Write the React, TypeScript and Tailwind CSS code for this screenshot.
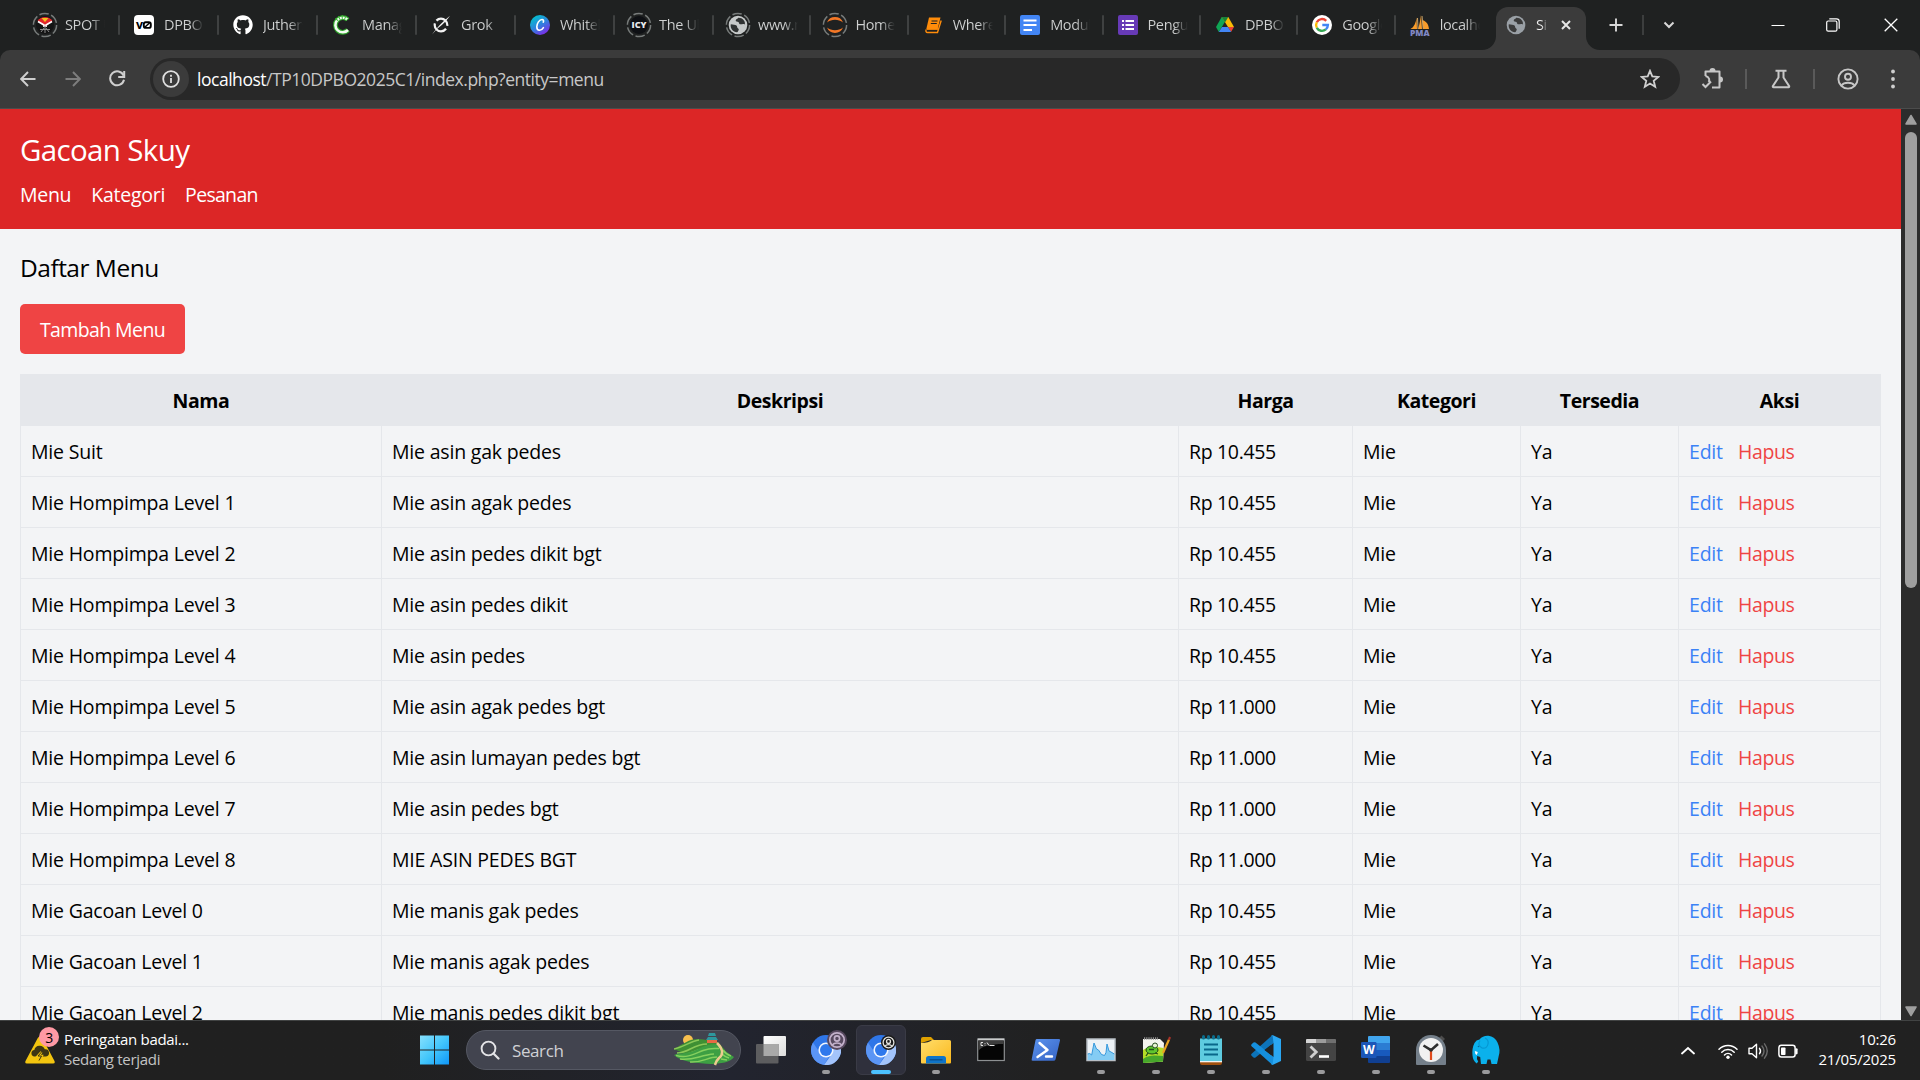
import React from "react";
import type { ReactNode } from "react";
import { FaGithub } from "react-icons/fa";

type SvgProps = { size?: number; box?: string; children: ReactNode; className?: string };

function Svg({ size = 30, box = "0 0 30 30", children, className = "" }: SvgProps) {
  return (
    <svg width={size} height={size} viewBox={box} fill="none" className={`shrink-0 ${className}`}>
      {children}
    </svg>
  );
}

/* ---------- Tab favicons ---------- */

function Ring({ children }: { children: ReactNode }) {
  return (
    <Svg size={26} box="0 0 26 26">
      <circle cx="13" cy="13" r="11.6" stroke="#777b7a" strokeWidth="1.5" strokeDasharray="9.5 2.65" />
      {children}
    </Svg>
  );
}

function Globe({ color, hole }: { color: string; hole: string }) {
  return (
    <g>
      <circle cx="13" cy="13" r="9.3" fill={color} />
      <path d="M5.800 12.200c2.200.4 4.500.3 5.700 1.300 1 .9.200 2 1.300 2.700 1.100.6 1.200 1.400.6 2.400-.3.700-.5 1.500-1.400 1.700-4-.5-7-4-6.200-8.100z" fill={hole} />
      <path d="M13.200 5.700c-.3 1.300-2.400 1.300-2.500 2.700 0 1.300 1.800.9 2.700 1.500.8.600.4 1.900 1.500 2.300 1.500.5 2.800-.8 4.900.2 1-3.400-2.500-7-6.600-6.700z" fill={hole} />
    </g>
  );
}

const favicons: ReactNode[] = [
  <Ring>
    <circle cx="13" cy="13" r="9" fill="#141414" />
    <path d="M5.500 9a9 9 0 0 1 15 0l-6 5h-3z" fill="#e3262b" />
    <path d="M9.500 6 13 10l3.500-4z" fill="#f6c21c" />
    <path d="M6 9.500 12 13v2M20 9.500 14 13v2" stroke="#fff" strokeWidth="1.700" />
    <path d="M8 17.500h10M13 14v7M12 16l-3 4M14 16l3 4" stroke="#8a8a8a" strokeWidth="1" />
  </Ring>,
  <Svg size={20} box="0 0 20 20">
    <rect width="20" height="20" rx="4" fill="#fff" />
    <text x="2" y="13.700" textLength="7" lengthAdjust="spacingAndGlyphs" fill="#000" fontSize="12" fontWeight="700">v</text>
    <rect x="9.800" y="7.300" width="7" height="5.600" rx="2" stroke="#000" strokeWidth="1.900" />
    <path d="m10.500 12.500 5.500-5" stroke="#000" strokeWidth="1.500" />
  </Svg>,
  <FaGithub size={20} color="#fff" />,
  <Svg size={20} box="0 0 20 20">
    <path d="M15.500 4.500A7.300 7.300 0 1 0 16 15" stroke="#2fa32b" strokeWidth="4.800" />
    <path d="M15.500 4.500A7.300 7.300 0 1 0 16 15" stroke="#f1fcf0" strokeWidth="2.600" />
    <path d="M16 4.700A7.300 7.300 0 0 0 4 6" stroke="#3cb534" strokeWidth="3.600" strokeDasharray="1 2" />
  </Svg>,
  <Svg size={20} box="0 0 20 20">
    <circle cx="10" cy="10" r="6.300" stroke="#f2f2f2" strokeWidth="2.200" strokeDasharray="17 3 17 3" strokeDashoffset="-4" />
    <path d="M1 19.500C5 14 11 7 19 .8 14 8 9 11.500 5.500 14.500z" fill="#f2f2f2" />
  </Svg>,
  <Svg size={20} box="0 0 20 20">
    <defs>
      <linearGradient id="canva" x1="3" y1="1" x2="15" y2="19" gradientUnits="userSpaceOnUse">
        <stop stopColor="#00c4cc" />
        <stop offset=".5" stopColor="#2b86dd" />
        <stop offset="1" stopColor="#7d2ae8" />
      </linearGradient>
    </defs>
    <circle cx="10" cy="10" r="10" fill="url(#canva)" />
    <path d="M13.300 7.200c.6-1.200.2-2.700-1.300-2.700-2.600 0-5.200 4-5.200 7.300 0 2 1 3.500 2.700 3.500s3-1.100 3.900-2.700" stroke="#fff" strokeWidth="1.600" strokeLinecap="round" />
  </Svg>,
  <Ring>
    <circle cx="13" cy="13" r="9" fill="#0e1014" />
    <text x="5.500" y="16" textLength="15" lengthAdjust="spacingAndGlyphs" fill="#e9e9ec" fontSize="8.500" fontWeight="800">ICY</text>
  </Ring>,
  <Ring>
    <Globe color="#c5c8c8" hole="#2f3232" />
  </Ring>,
  <Ring>
    <path d="M5 10.500a8.600 8.600 0 0 1 16 0c-4.500-3.700-11.500-3.700-16 0z" fill="#f37726" />
    <path d="M5 15.500a8.600 8.600 0 0 0 16 0c-4.500 3.700-11.500 3.700-16 0z" fill="#f37726" />
  </Ring>,
  <Svg size={18} box="0 0 18 18">
    <path d="M5 1.500h11.500l-3 12H2.200z" fill="#ff8c0a" />
    <path d="M3 13h11.500M2.200 13.500c-.8 1.600 0 3 1.300 3h10l3.700-12" stroke="#ff8c0a" strokeWidth="1.400" />
    <path d="M7.500 5h6M6.800 7.500h6" stroke="#1f2121" strokeWidth="1.100" />
  </Svg>,
  <Svg size={20} box="0 0 20 20">
    <rect width="20" height="20" rx="2" fill="#4285f4" />
    <path d="M3.500 5.500h13M3.500 10h13M3.500 15h8.500" stroke="#fff" strokeWidth="2.200" />
  </Svg>,
  <Svg size={20} box="0 0 20 20">
    <rect width="20" height="20" rx="2" fill="#673ab7" />
    <path d="M7.500 6H16M7.500 10H16M7.500 14H16M4 6h2M4 10h2M4 14h2" stroke="#fff" strokeWidth="2" />
  </Svg>,
  <Svg size={20} box="0 0 20 20">
    <path d="M6.700 2 1 12l2.800 5L10 6.800z" fill="#0fa554" />
    <path d="M6.700 2h6.600L19 12h-6z" fill="#fbbc05" />
    <path d="M6.700 2h6.600L10 7.500z" fill="#188038" />
    <path d="M13 12h6l-3 5z" fill="#ea4335" />
    <path d="M3.800 17 7 12h6l3.200 5z" fill="#4285f4" />
  </Svg>,
  <Svg size={20} box="0 0 20 20">
    <circle cx="10" cy="10" r="10" fill="#fff" />
    <path d="M14.200 5.800A5.900 5.900 0 0 0 4.800 7.200" stroke="#ea4335" strokeWidth="2.400" />
    <path d="M4.800 7.200a5.900 5.900 0 0 0 0 5.600" stroke="#fbbc05" strokeWidth="2.400" />
    <path d="M4.800 12.800a5.900 5.900 0 0 0 9 1.600" stroke="#34a853" strokeWidth="2.400" />
    <path d="M13.800 14.400A5.900 5.900 0 0 0 15.900 10H10.300" stroke="#4285f4" strokeWidth="2.400" />
  </Svg>,
  <Svg size={21} box="0 0 21 21">
    <path d="M7.500 2.500C7 8 5 12 1.500 14H8zM12 0c-1 6-1.500 10-3 14h4zM13.500 5c5 2 6 5 6.500 9h-6z" fill="#f89c2b" />
    <path d="M8.500 3 9 14M13 1l1.200 13" stroke="#c9a46a" strokeWidth="1" />
    <text x="1" y="20.500" textLength="19.500" lengthAdjust="spacingAndGlyphs" fill="#8088c4" fontSize="8" fontWeight="800">PMA</text>
  </Svg>,
];

const tabTitles = ["SPOT UPI", "DPBO C", "Juthersk", "Manage", "Grok", "Whiteb", "The Ulti", "www.me", "Home P", "Where i", "Modul 1", "Pengum", "DPBO 2", "Google", "localhos"];

function TabStrip() {
  return (
    <div className="flex h-[50px] bg-[#1f2121] pl-[21px]">
      <div className="flex w-[1472px] shrink-0">
        {tabTitles.map((title, i) => (
          <div key={title} className={`relative flex items-center ${i < 7 ? "w-[99px] shrink-0" : "min-w-0 flex-1"}`}>
            <span className="flex w-12 shrink-0 items-center justify-center">{favicons[i]}</span>
            <span className="-ml-[4px] w-[40px] overflow-hidden bg-gradient-to-r from-[#d0d2d2] from-65% to-[#1f2121] bg-clip-text text-[14.5px] tracking-[-0.35px] whitespace-nowrap text-transparent">
              {title}
            </span>
            {i < 14 && <span className="absolute top-[15px] right-0 h-5 w-[2px] rounded bg-[#3f4141]" />}
          </div>
        ))}
      </div>
      <div className="relative mt-[7px] ml-[3px] flex h-[43px] w-[90px] shrink-0 items-center rounded-t-[12px] bg-[#3b3b3b] pb-[7px] pl-[7px]">
        <svg className="absolute bottom-0 -left-[14px]" width="14" height="14"><path d="M14 0v14H0A14 14 0 0 0 14 0z" fill="#3b3b3b" /></svg>
        <svg className="absolute -right-[14px] bottom-0" width="14" height="14"><path d="M0 0v14h14A14 14 0 0 1 0 0z" fill="#3b3b3b" /></svg>
        <Svg size={26} box="0 0 26 26"><Globe color="#9aa0a6" hole="#3b3b3b" /></Svg>
        <span className="ml-[7px] w-[11px] overflow-hidden bg-gradient-to-r from-[#f0f0f0] from-50% to-[#4a4a4a] bg-clip-text text-[14.5px] tracking-[-0.4px] whitespace-nowrap text-transparent">Sistem</span>
        <Svg size={10} box="0 0 10 10" className="ml-[14px]"><path d="m1 1 8 8M9 1 1 9" stroke="#e6e6e6" strokeWidth="2" /></Svg>
      </div>
      <div className="flex flex-1 items-center">
        <Svg size={14} box="0 0 14 14" className="ml-[23px]"><path d="M7 .5v13M.5 7h13" stroke="#d8d8d8" strokeWidth="1.900" /></Svg>
        <span className="ml-[19px] h-5 w-[2px] bg-[#3c3e3e]" />
        <Svg size={12} box="0 0 12 12" className="ml-[19px]"><path d="m1.500 3.500 4.500 4.500 4.500-4.500" stroke="#d8d8d8" strokeWidth="2" /></Svg>
        <Svg size={14} box="0 0 14 14" className="ml-[96px]"><path d="M.5 7.500h13" stroke="#fff" strokeWidth="1" /></Svg>
        <Svg size={14} box="0 0 14 14" className="ml-[41px]">
          <rect x=".7" y="3" width="10.200" height="10.200" rx="1.500" stroke="#fff" strokeWidth="1.200" />
          <path d="M3.300.8h7.200a2.700 2.700 0 0 1 2.700 2.700v7.200" stroke="#fff" strokeWidth="1.200" />
        </Svg>
        <Svg size={14} box="0 0 14 14" className="ml-[44px]"><path d="m.7.7 12.600 12.600M13.300.7.7 13.300" stroke="#fff" strokeWidth="1.300" /></Svg>
      </div>
    </div>
  );
}

function Toolbar() {
  return (
    <div className="bg-[#1f2121]">
      <div className="flex h-[59px] items-center rounded-t-[10px] border-b border-[#4c4c4c] bg-[#3b3b3b]">
        <Svg size={16} box="0 0 16 16" className="ml-[20px]"><path d="M15.500 8H1.500M8 1 1.200 8 8 15" stroke="#cfcfcf" strokeWidth="1.900" /></Svg>
        <Svg size={16} box="0 0 16 16" className="ml-[29px]"><path d="M.5 8h14M8 1l6.800 7L8 15" stroke="#7d7d7d" strokeWidth="1.900" /></Svg>
        <Svg size={18} box="0 0 18 18" className="ml-[27px]">
          <path d="M15.600 5.500A7 7 0 1 0 16 9.800" stroke="#cfcfcf" strokeWidth="2" />
          <path d="M16.200 1v6h-6" stroke="#cfcfcf" strokeWidth="2" />
        </Svg>
        <div className="ml-[24px] flex h-[42px] w-[1530px] items-center rounded-full bg-[#282828] pl-[3px]">
          <span className="flex size-9 items-center justify-center rounded-full bg-[#3b3b3b]">
            <Svg size={18} box="0 0 18 18">
              <circle cx="9" cy="9" r="7.800" stroke="#e0e0e0" strokeWidth="1.800" />
              <path d="M9 8v5M9 4.800v1.900" stroke="#e0e0e0" strokeWidth="1.800" />
            </Svg>
          </span>
          <span className="ml-[8px] flex-1 pt-px text-[17.5px] tracking-[-0.47px] text-[#c7c7c7]">
            <span className="text-white">localhost</span>/TP10DPBO2025C1/index.php?entity=menu
          </span>
          <Svg size={20} box="0 0 20 20" className="mr-[20px]">
            <path d="m10 1.800 2.300 5.600 6 .5-4.600 3.900 1.500 5.900L10 14.500l-5.200 3.200 1.500-5.900L1.700 7.900l6-.5z" stroke="#d0d0d0" strokeWidth="1.800" />
          </Svg>
        </div>
        <Svg size={24} box="0 0 24 24" className="ml-[21px]">
          <path d="M4.500 9V4.500h14V20.500H11" stroke="#c7c7c7" strokeWidth="2" strokeLinejoin="round" />
          <path d="M8.500 4a2.900 2.900 0 0 1 6 0zM19 9.500a3 3 0 0 1 0 6z" fill="#c7c7c7" />
          <path d="M4.500 9c4 .8 4.500 4.500 3 6M1.500 17l3 3 5.500-5.500" stroke="#c7c7c7" strokeWidth="2" />
        </Svg>
        <span className="ml-[20px] h-5 w-[2px] bg-[#5a5a5a]" />
        <Svg size={20} box="0 0 20 20" className="ml-[24px]">
          <path d="M4.500 1.800h11M7.500 2v6.500L1.800 17.200q-.2 1 .7 1.100h15q.9-.1.700-1.100L12.500 8.500V2" stroke="#c7c7c7" strokeWidth="2" />
        </Svg>
        <span className="ml-[22px] h-5 w-[2px] bg-[#5a5a5a]" />
        <Svg size={22} box="0 0 22 22" className="ml-[22px]">
          <circle cx="11" cy="11" r="9.600" stroke="#c7c7c7" strokeWidth="1.900" />
          <circle cx="11" cy="8.700" r="3" stroke="#c7c7c7" strokeWidth="1.900" />
          <path d="M4.500 17.500c2.500-3.700 10.500-3.700 13 0" stroke="#c7c7c7" strokeWidth="1.900" />
        </Svg>
        <Svg size={20} box="0 0 20 20" className="ml-[24px]">
          <g fill="#cfcfcf"><circle cx="10" cy="2.500" r="1.900" /><circle cx="10" cy="10" r="1.900" /><circle cx="10" cy="17.500" r="1.900" /></g>
        </Svg>
      </div>
    </div>
  );
}

/* ---------- Page ---------- */

const rows: [string, string, string][] = [
  ["Mie Suit", "Mie asin gak pedes", "10.455"],
  ["Mie Hompimpa Level 1", "Mie asin agak pedes", "10.455"],
  ["Mie Hompimpa Level 2", "Mie asin pedes dikit bgt", "10.455"],
  ["Mie Hompimpa Level 3", "Mie asin pedes dikit", "10.455"],
  ["Mie Hompimpa Level 4", "Mie asin pedes", "10.455"],
  ["Mie Hompimpa Level 5", "Mie asin agak pedes bgt", "11.000"],
  ["Mie Hompimpa Level 6", "Mie asin lumayan pedes bgt", "11.000"],
  ["Mie Hompimpa Level 7", "Mie asin pedes bgt", "11.000"],
  ["Mie Hompimpa Level 8", "MIE ASIN PEDES BGT", "11.000"],
  ["Mie Gacoan Level 0", "Mie manis gak pedes", "10.455"],
  ["Mie Gacoan Level 1", "Mie manis agak pedes", "10.455"],
  ["Mie Gacoan Level 2", "Mie manis pedes dikit bgt", "10.455"],
];

const cell = "h-[51px] border border-gray-200 px-[10px] pt-[2px] pb-0";

function Page() {
  return (
    <div className="flex min-h-0 flex-1">
      <main className="w-[1901px] overflow-hidden bg-[#f3f4f6] text-[19.5px] leading-[30px] tracking-[-0.2px] text-black">
        <header className="h-[120px] bg-[#dc2626] px-5 pt-[21px] text-white">
          <h1 className="text-[29.5px] leading-[40px] tracking-[-0.65px]">Gacoan Skuy</h1>
          <nav className="mt-[10px] flex gap-5">
            <a className="tracking-[-0.3px]">Menu</a>
            <a className="tracking-[-0.25px]">Kategori</a>
            <a className="tracking-[-0.7px]">Pesanan</a>
          </nav>
        </header>
        <div className="px-5 pt-[21px]">
          <h2 className="mb-[19px] text-[24.5px] leading-[35px] tracking-[-0.5px]">Daftar Menu</h2>
          <button className="flex h-[50px] w-[165px] items-center justify-center rounded-[5px] bg-[#ef4444] pt-[2px] tracking-[-0.6px] text-white">Tambah Menu</button>
          <table className="mt-5 w-[1861px] table-fixed border-collapse">
            <colgroup>
              <col className="w-[361px]" />
              <col className="w-[797px]" />
              <col className="w-[174px]" />
              <col className="w-[168px]" />
              <col className="w-[158px]" />
              <col className="w-[202px]" />
            </colgroup>
            <thead>
              <tr className="bg-gray-200 font-bold tracking-[-0.45px]">
                {["Nama", "Deskripsi", "Harga", "Kategori", "Tersedia", "Aksi"].map((h) => (
                  <th key={h} className={cell}>{h}</th>
                ))}
              </tr>
            </thead>
            <tbody>
              {rows.map(([name, desc, price]) => (
                <tr key={name}>
                  <td className={cell}>{name}</td>
                  <td className={cell}>{desc}</td>
                  <td className={`${cell} tracking-[-0.33px]`}>Rp {price}</td>
                  <td className={cell}>Mie</td>
                  <td className={cell}>Ya</td>
                  <td className={cell}>
                    <span className="flex gap-[15px]">
                      <a className="w-[34px] text-[#3b82f6]">Edit</a>
                      <a className="tracking-[-0.4px] text-[#ef4444]">Hapus</a>
                    </span>
                  </td>
                </tr>
              ))}
            </tbody>
          </table>
        </div>
      </main>
      <div className="flex flex-1 flex-col items-center justify-between bg-[#2c2c2c] pt-[5px] pb-[3px]">
        <div className="flex flex-col items-center gap-[6px]">
          <Svg size={12} box="0 0 12 12"><path d="M6 1.500 11 10H1z" fill="#9f9f9f" stroke="#9f9f9f" strokeWidth="1.500" strokeLinejoin="round" /></Svg>
          <span className="h-[456px] w-[12px] rounded-full bg-[#9f9f9f]" />
        </div>
        <Svg size={12} box="0 0 12 12"><path d="M6 10.500 11 2H1z" fill="#9f9f9f" stroke="#9f9f9f" strokeWidth="1.500" strokeLinejoin="round" /></Svg>
      </div>
    </div>
  );
}

/* ---------- Taskbar ---------- */

function Chromium({ badge }: { badge: "tinted" | "dark" }) {
  const tinted = badge === "tinted";
  return (
    <span className="relative">
      <Svg>
        <circle cx="15" cy="15" r="15" fill="#2f76e8" />
        <path d="M2 7.500A15 15 0 0 0 13 29.900L20 18H9z" fill="#5b95f5" />
        <path d="M15 8h13.300A15 15 0 0 1 13 29.900L21.500 18z" fill="#a3c4fb" />
        <circle cx="15" cy="15" r="7.600" fill="#f1f6ff" />
        <circle cx="15" cy="15" r="6" fill="#2f78ec" />
      </Svg>
      <svg
        className={tinted ? "absolute -top-[5px] -right-[6px]" : "absolute top-0 right-0"}
        width={tinted ? 20 : 15}
        height={tinted ? 20 : 15}
        viewBox="0 0 20 20"
        fill="none"
      >
        <circle cx="10" cy="10" r="10" fill={tinted ? "#57495f" : "#1b1b1b"} />
        <g stroke={tinted ? "#c3b1cb" : "#e3e3df"} strokeWidth="1.700">
          <circle cx="10" cy="10" r="7.200" />
          <circle cx="10" cy="8.500" r="2.600" />
          <path d="M5.300 15c2-2.700 7.400-2.700 9.400 0" />
        </g>
      </svg>
    </span>
  );
}

const taskIcons: { icon: ReactNode; state: "idle" | "open" | "active" }[] = [
  {
    state: "idle",
    icon: (
      <Svg>
        <defs><linearGradient id="tv" x1="0" y1="0" x2="1" y2="1"><stop stopColor="#fff" /><stop offset="1" stopColor="#dcdcdc" /></linearGradient></defs>
        <rect x="7.500" y="1" width="22.500" height="20" rx="1" fill="url(#tv)" />
        <path d="M1 9h21.500v18.500q0 1-1 1H1q-1 0-1-1V10q0-1 1-1z" fill="#5d5d5f" />
        <path d="M7.500 9h15v12h-15z" fill="#a9a9a9" />
      </Svg>
    ),
  },
  { state: "open", icon: <Chromium badge="tinted" /> },
  { state: "active", icon: <Chromium badge="dark" /> },
  {
    state: "open",
    icon: (
      <Svg>
        <defs><linearGradient id="fold" x1="0" y1="0" x2="1" y2="1"><stop stopColor="#ffdd6b" /><stop offset="1" stopColor="#fbb81c" /></linearGradient></defs>
        <path d="M0 4q0-2 2-2h8l3 3h-3L0 8z" fill="#e0a100" />
        <path d="M0 8q8 0 11-3h17.500Q30 5 30 6.500V27.500q0 1-1 1H1q-1 0-1-1z" fill="url(#fold)" />
        <path d="M5 28.500v-5q0-2.500 2.500-2.500h15q2.500 0 2.500 2.500v5z" fill="#0f74c9" />
        <path d="M8.500 24.800h13" stroke="#0a4c8c" strokeWidth="1.300" />
      </Svg>
    ),
  },
  {
    state: "idle",
    icon: (
      <Svg>
        <rect x="1.700" y="4" width="26.600" height="21.500" fill="#050505" stroke="#8d9092" strokeWidth="1.200" />
        <path d="M2 3.500h26v2H2z" fill="#c9cbcc" />
        <path d="M2.300 5.500h25.400v3.500C14 9 6 11 2.300 16z" fill="#3d3d3d" />
        <path d="M7 7.500H5v3h2M9 8v.8M9 9.800v.7M11 7.500l2 3M13.500 10.500h5" stroke="#e2e2e2" strokeWidth="1" />
      </Svg>
    ),
  },
  {
    state: "idle",
    icon: (
      <Svg>
        <defs><linearGradient id="ps" x1="0" y1="0" x2="1" y2="1"><stop stopColor="#5b93ee" /><stop offset="1" stopColor="#3563c4" /></linearGradient></defs>
        <path d="M6 4h22q1.500 0 1 1.500L24.500 24.500q-.4 1.300-2 1.300H2q-1.800 0-1.300-1.600L4.500 5.300Q4.800 4 6 4z" fill="url(#ps)" />
        <path d="m8.500 8 8 7-10 7M15 21.500h6" stroke="#fff" strokeWidth="2.400" strokeLinecap="round" strokeLinejoin="round" />
      </Svg>
    ),
  },
  {
    state: "open",
    icon: (
      <Svg>
        <rect x="1" y="4" width="28" height="21.500" fill="#edf2f6" stroke="#b8bfc5" strokeWidth="1.500" />
        <path d="m1.700 19 2-.5 2 1.500L8 8l2.500 6 2 1 3 4.500 3 1 1.500-3L21 9l2 7 2 1 3.300 2v6H1.700z" fill="#84ccf4" />
        <path d="m1.700 19 2-.5 2 1.500L8 8l2.500 6 2 1 3 4.500 3 1 1.500-3L21 9l2 7 2 1 3.300 2" stroke="#3698dc" strokeWidth="1" />
      </Svg>
    ),
  },
  {
    state: "open",
    icon: (
      <Svg>
        <path d="M2 4h17l4 4-1 18.500L2 28z" fill="#f4f4ee" />
        <path d="M2 15c6-4 14-3 20.500-2L22 26.500 2 28z" fill="#b4dc27" />
        <path d="M2 24c7-5 14-3 20-3v5.500L2 28z" fill="#47a72b" />
        <path d="M3 3.500h14" stroke="#8f8f8f" strokeWidth="2.500" strokeDasharray="1.200 1" />
        <ellipse cx="11" cy="15" rx="6" ry="4" fill="#5fc52e" stroke="#1b4215" strokeWidth="1" />
        <circle cx="14" cy="10.500" r="2.500" fill="#e8f4d4" stroke="#294d21" strokeWidth="1" />
        <path d="m7 18-2 3M14 18l3 1M8 14.500h5" stroke="#20501a" strokeWidth="1.300" />
        <path d="M28 4.500 22 18" stroke="#eaa21f" strokeWidth="2.200" />
        <path d="m29 2-1.100 2.800" stroke="#a8322a" strokeWidth="2.200" />
      </Svg>
    ),
  },
  {
    state: "open",
    icon: (
      <Svg>
        <path d="M4 26h22v2q0 2-2 2H6q-2 0-2-2z" fill="#a0500e" />
        <path d="M4 25.300h22v2H4z" fill="#f2f2f2" />
        <path d="M4 3.500h22V26H4z" fill="#5ecbdf" />
        <path d="M8 9.500h14M8 14.500h14M8 19.500h14" stroke="#09678a" strokeWidth="1.800" />
        <path d="M7.500 1.500v1.500M12.500 1.500v1.500M17.500 1.500v1.500M22.500 1.500v1.500" stroke="#0b6d8c" strokeWidth="3" strokeLinecap="round" />
      </Svg>
    ),
  },
  {
    state: "open",
    icon: (
      <Svg>
        <path d="m21.500 0 8.500 4v22l-8.500 4L20 29V1z" fill="#2aa7f3" />
        <path d="m21.500 0 1 8L4.500 22.500q-1 .7-2 0L.6 20.700q-1-1 0-1.900z" fill="#0d74ba" />
        <path d="m21.500 30 1-8L4.500 7.500q-1-.7-2 0L.6 9.300q-1 1 0 1.900z" fill="#158fdd" />
        <path d="M22.500 8v14L13.500 15z" fill="#222" />
      </Svg>
    ),
  },
  {
    state: "open",
    icon: (
      <Svg>
        <rect y="4" width="30" height="22" rx="1.500" fill="#444" />
        <path d="M0 8V5q0-1 1-1h9v4z" fill="#d5d5d5" />
        <path d="M10 4h10v4H10z" fill="#9b9b9b" />
        <path d="M20 4h9q1 0 1 1v3H20z" fill="#6f6f6f" />
        <path d="m4.500 11.500 5.700 5.500-5.700 5.500" stroke="#cfcfcf" strokeWidth="2.800" />
        <path d="M13 21.500h10" stroke="#fff" strokeWidth="2.600" />
      </Svg>
    ),
  },
  {
    state: "open",
    icon: (
      <Svg>
        <path d="M7 2q0-1 1-1h20q1 0 1 1v6H7z" fill="#41a5ee" />
        <path d="M7 8h22v7H7z" fill="#2b7cd3" />
        <path d="M7 15h22v6H7z" fill="#185abd" />
        <path d="M7 21h22v6q0 1-1 1H8q-1 0-1-1z" fill="#103f91" />
        <rect y="7" width="15.500" height="16" rx="1.300" fill="#1b56b8" />
        <text x="2" y="19" textLength="11.500" lengthAdjust="spacingAndGlyphs" fill="#fff" fontSize="12" fontWeight="700">W</text>
      </Svg>
    ),
  },
  {
    state: "open",
    icon: (
      <Svg>
        <path d="m22 4 3.500-3.500L29 4l-3 3z" fill="#4d4d4d" />
        <path d="M15 0a15 15 0 0 1 15 15v14q0 1-1 1H1q-1 0-1-1V15A15 15 0 0 1 15 0z" fill="#747f8a" />
        <circle cx="15" cy="15" r="12" fill="#f1f1f1" />
        <path d="m7.500 10.500 7.500 4.700 7-6.200" stroke="#2d2d2d" strokeWidth="2.600" />
        <path d="M15 15.500V25" stroke="#e04a1c" strokeWidth="2.200" />
        <circle cx="15" cy="15" r="1.800" fill="#2d2d2d" />
      </Svg>
    ),
  },
  {
    state: "open",
    icon: (
      <Svg>
        <path d="M8.500 4.500Q12 .3 17.500.8q6 .7 9 6.700Q30 15 27.500 22L26 29h-5.500l-1-4.500h-3l-1 4.500H10l-.8-7-3-1q-1 2.500 1 5.500l-1.500 2Q2 26 1.500 20.500q-.8-7 2-12.500 1.700-3.200 5-3.500z" fill="#0bb1ec" />
        <path d="M9 5.500q-3 4.500 2 7.500 5 1 6-4 1-4-3-6" stroke="#0698d3" strokeWidth="1.200" />
        <path d="m3.800 16 3 1-1 3q-2-1-2-4z" fill="#fff" />
        <circle cx="7.500" cy="11.500" r=".8" fill="#066a9b" />
      </Svg>
    ),
  },
];

function SearchScene() {
  return (
    <svg width="60" height="34" viewBox="0 0 60 34" fill="none">
      <circle cx="14" cy="7" r="5" fill="#f8c04e" />
      <path d="M0 16C9 11 15 6 24 6s12 3 20 3l7 8-31 8z" fill="#3f8f33" />
      <path d="M0 16c10-2 17-8 25-9M3 20c12 0 16-9 30-9M8 22c10-1 16-7 28-7" stroke="#8bc858" strokeWidth="1.500" />
      <path d="M0 22c8-3 14-1 22-5 9-5 19-8 24-4 5 5 9 8 14 11-3 5-14 7-23 7-13-1-28-1-37-9z" fill="#3d9f43" />
      <path d="M2 22.500c12 3 19-2 27-5s11-2 16-2M6 26c13 2 20-4 34-5M16 29c12 1 18-5 27-5M49 17c2 3 5 5 8 6M48 21c2 2 4 3 7 4M47 26l6 1" stroke="#86d05e" strokeWidth="1.500" />
      <path d="M43 10c7 7 6 12 2 15-3 3-3 4-4 7" stroke="#edcb90" strokeWidth="2.500" />
      <path d="M33 7h10v3H33z" fill="#e66b45" />
      <path d="m32 7 2-3h8l2 3zM34 3l1-3h6l1 3z" fill="#2e979d" />
    </svg>
  );
}

function Taskbar() {
  return (
    <div className="flex h-[60px] border-t border-[#414343] bg-gradient-to-r from-[#202020] from-20% via-[#22242f] via-38% to-[#212121] to-55% tracking-[-0.3px]">
      <div className="flex w-[420px] pl-[25px]">
        <div className="relative mt-[13px] h-[32px] w-[30px]">
          <Svg className="mt-[1px]">
            <path d="M15 1.500q1.500 0 2.500 2L29.500 26q1 2.500-1.500 2.500H2Q-.5 28.500.5 26L12.500 3.500q1-2 2.500-2z" fill="#f3c50f" />
            <path d="M9 21.500a3.300 3.300 0 0 1 .3-6.500 5.500 5.500 0 0 1 10.500-.7 3.600 3.600 0 0 1 1.200 7.200z" fill="#3c3514" />
            <path d="m16.500 17-3.500 4h3.500L14 25.500" stroke="#f3c50f" strokeWidth="2.600" />
            <path d="m16.500 17-3.500 4h3.500L14 25.500" stroke="#3c3514" strokeWidth="1" />
          </Svg>
          <span className="absolute -top-[7px] left-[14px] flex size-5 items-center justify-center rounded-full bg-[#ff99a4] text-[14px] text-black">3</span>
        </div>
        <div className="mt-[8px] ml-[9px] text-[15px] leading-[20px]">
          <p className="text-white">Peringatan badai...</p>
          <p className="text-[#c4c4c4]">Sedang terjadi</p>
        </div>
      </div>
      <Svg className="mt-[14px]">
        <defs><linearGradient id="win" x1="0" y1="0" x2="30" y2="30" gradientUnits="userSpaceOnUse"><stop stopColor="#88e1fd" /><stop offset=".5" stopColor="#43c6fb" /><stop offset="1" stopColor="#0c94f8" /></linearGradient></defs>
        <path d="M0 .5h14v14H0zM15 .5h14v14H15zM0 15.500h14v14H0zM15 15.500h14v14H15z" fill="url(#win)" />
      </Svg>
      <div className="mt-[9px] ml-[16px] flex h-[40px] w-[275px] items-center rounded-full border border-[#555863] bg-[#42444f] pr-[6px] pl-[13px]">
        <Svg size={20} box="0 0 20 20"><circle cx="8.500" cy="8.500" r="6.900" stroke="#e4e4e7" strokeWidth="1.900" /><path d="m13.500 13.500 5 5" stroke="#e4e4e7" strokeWidth="2.200" strokeLinecap="round" /></Svg>
        <span className="ml-[12px] flex-1 pt-px text-[17px] tracking-[-0.4px] text-[#d0d1d5]">Search</span>
        <SearchScene />
      </div>
      <div className="ml-[2.500px] flex">
        {taskIcons.map(({ icon, state }, i) => (
          <div key={i} className="relative flex w-[55px] justify-center pt-[4px]">
            <span className={state === "active" ? "flex h-[50px] w-[50px] justify-center rounded-[6px] border border-[#3a3b46] bg-[#2f303c] pt-[9px]" : "flex pt-[10px]"}>{icon}</span>
            {state === "open" && <span className="absolute top-[49px] h-[4px] w-[8px] rounded-full bg-[#9a9a9c]" />}
            {state === "active" && <span className="absolute top-[49px] h-[4px] w-[20px] rounded-full bg-[#4cc2ff]" />}
          </div>
        ))}
      </div>
      <div className="flex flex-1 items-center justify-end pr-6 text-white">
        <Svg size={14} box="0 0 14 14"><path d="m1 9.500 6-5.500 6 5.500" stroke="#fff" strokeWidth="1.800" strokeLinecap="round" /></Svg>
        <Svg size={20} box="0 0 20 20" className="ml-[23px]">
          <path d="M1 8.200a12.600 12.600 0 0 1 18 0M3.800 11.200a8.700 8.700 0 0 1 12.400 0M6.500 14a5 5 0 0 1 7 0" stroke="#fff" strokeWidth="1.500" strokeLinecap="round" />
          <circle cx="10" cy="16.300" r="1.700" fill="#fff" />
        </Svg>
        <Svg size={20} box="0 0 20 20" className="ml-[10px]">
          <path d="M1 7.300h3l4.500-4v13.400l-4.500-4H1z" stroke="#fff" strokeWidth="1.400" strokeLinejoin="round" />
          <path d="M11.500 7.300q2 2.700 0 5.400" stroke="#fff" strokeWidth="1.400" strokeLinecap="round" />
          <path d="M14 5q4 5 0 10M16.500 2.800q5.500 7.200 0 14.400" stroke="#6a6a6a" strokeWidth="1.400" strokeLinecap="round" />
        </Svg>
        <Svg size={20} box="0 0 20 20" className="ml-[10px]">
          <rect x=".9" y="4.300" width="16.200" height="11.800" rx="2.500" stroke="#fff" strokeWidth="1.500" />
          <rect x="3" y="6.500" width="4.500" height="7.500" rx=".8" fill="#fff" />
          <path d="M18.500 8.300v4" stroke="#fff" strokeWidth="2.200" strokeLinecap="round" />
        </Svg>
        <div className="-mt-[3px] ml-[19px] w-[79px] text-right text-[15px] leading-[20px] tracking-[-0.2px] whitespace-nowrap">
          <p>10:26</p>
          <p>21/05/2025</p>
        </div>
      </div>
    </div>
  );
}

export default function App() {
  return (
    <div className="flex h-[1080px] w-[1920px] flex-col overflow-hidden font-['Open_Sans','Noto_Sans',sans-serif]">
      <TabStrip />
      <Toolbar />
      <Page />
      <Taskbar />
    </div>
  );
}
